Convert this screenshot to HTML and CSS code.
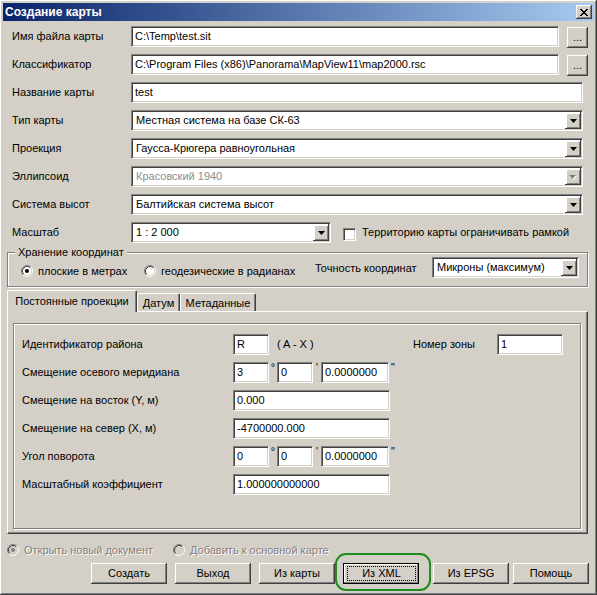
FILE: index.html
```html
<!DOCTYPE html>
<html lang="ru">
<head>
<meta charset="utf-8">
<title>Создание карты</title>
<link rel="stylesheet" href="styles.css">
</head>
<body>
<div class="window">
  <div class="titlebar">
    <span class="title">Создание карты</span>
    <span class="close">
      <svg width="8" height="7" viewBox="0 0 8 7"><g fill="#000"><rect x="0" y="0" width="2" height="1"/><rect x="6" y="0" width="2" height="1"/><rect x="1" y="1" width="2" height="1"/><rect x="5" y="1" width="2" height="1"/><rect x="2" y="2" width="4" height="1"/><rect x="3" y="3" width="2" height="1"/><rect x="2" y="4" width="4" height="1"/><rect x="1" y="5" width="2" height="1"/><rect x="5" y="5" width="2" height="1"/><rect x="0" y="6" width="2" height="1"/><rect x="6" y="6" width="2" height="1"/></g></svg>
    </span>
  </div>

  <div class="content">
    <div class="rows">
      <div class="row">
        <span class="lbl">Имя файла карты</span>
        <div class="edit w-file">C:\Temp\test.sit</div>
        <div class="btn dots">...</div>
      </div>
      <div class="row">
        <span class="lbl">Классификатор</span>
        <div class="edit w-file">C:\Program Files (x86)\Panorama\MapView11\map2000.rsc</div>
        <div class="btn dots">...</div>
      </div>
      <div class="row">
        <span class="lbl">Название карты</span>
        <div class="edit w-full">test</div>
      </div>
      <div class="row">
        <span class="lbl">Тип карты</span>
        <div class="combo w-full"><span class="ctext">Местная система на базе СК-63</span><span class="drop"><svg width="7" height="4" viewBox="0 0 7 4"><polygon points="0,0 7,0 3.5,4" fill="#000"/></svg></span></div>
      </div>
      <div class="row">
        <span class="lbl">Проекция</span>
        <div class="combo w-full"><span class="ctext">Гаусса-Крюгера равноугольная</span><span class="drop"><svg width="7" height="4" viewBox="0 0 7 4"><polygon points="0,0 7,0 3.5,4" fill="#000"/></svg></span></div>
      </div>
      <div class="row">
        <span class="lbl">Эллипсоид</span>
        <div class="combo w-full disabled"><span class="ctext">Красовский 1940</span><span class="drop"><svg width="8" height="5" viewBox="0 0 8 5"><polygon points="1,1 8,1 4.5,5" fill="#fff"/><polygon points="0,0 7,0 3.5,4" fill="#808080"/></svg></span></div>
      </div>
      <div class="row">
        <span class="lbl">Система высот</span>
        <div class="combo w-full"><span class="ctext">Балтийская система высот</span><span class="drop"><svg width="7" height="4" viewBox="0 0 7 4"><polygon points="0,0 7,0 3.5,4" fill="#000"/></svg></span></div>
      </div>
      <div class="row">
        <span class="lbl">Масштаб</span>
        <div class="combo w-scale"><span class="ctext">1 : 2 000</span><span class="drop"><svg width="7" height="4" viewBox="0 0 7 4"><polygon points="0,0 7,0 3.5,4" fill="#000"/></svg></span></div>
        <span class="check"></span>
        <span class="check-lbl">Территорию карты ограничивать рамкой</span>
      </div>
    </div>

    <div class="group">
      <div class="legend">Хранение координат</div>
      <div class="grow">
        <div class="opt opt1">
          <svg class="radio" width="12" height="12" viewBox="0 0 12 12"><circle cx="6" cy="6" r="4.6" fill="#fff"/><path d="M2.11 9.89 A5.5 5.5 0 0 1 9.89 2.11" fill="none" stroke="#808080"/><path d="M9.89 2.11 A5.5 5.5 0 0 1 2.11 9.89" fill="none" stroke="#fff"/><path d="M2.82 9.18 A4.5 4.5 0 0 1 9.18 2.82" fill="none" stroke="#404040"/><path d="M9.18 2.82 A4.5 4.5 0 0 1 2.82 9.18" fill="none" stroke="#D4D0C8"/><circle cx="6" cy="6" r="2" fill="#000"/></svg>
          <span class="otext">плоские в метрах</span>
        </div>
        <div class="opt opt2">
          <svg class="radio" width="12" height="12" viewBox="0 0 12 12"><circle cx="6" cy="6" r="4.6" fill="#fff"/><path d="M2.11 9.89 A5.5 5.5 0 0 1 9.89 2.11" fill="none" stroke="#808080"/><path d="M9.89 2.11 A5.5 5.5 0 0 1 2.11 9.89" fill="none" stroke="#fff"/><path d="M2.82 9.18 A4.5 4.5 0 0 1 9.18 2.82" fill="none" stroke="#404040"/><path d="M9.18 2.82 A4.5 4.5 0 0 1 2.82 9.18" fill="none" stroke="#D4D0C8"/></svg>
          <span class="otext">геодезические в радианах</span>
        </div>
        <span class="prec-lbl">Точность координат</span>
        <div class="combo w-prec"><span class="ctext">Микроны (максимум)</span><span class="drop"><svg width="7" height="4" viewBox="0 0 7 4"><polygon points="0,0 7,0 3.5,4" fill="#000"/></svg></span></div>
      </div>
    </div>

    <div class="tabs">
      <div class="tab tab-active t1">Постоянные проекции</div>
      <div class="tab t2">Датум</div>
      <div class="tab t3">Метаданные</div>
    </div>
    <div class="panel">
      <div class="igroup">
        <div class="irow">
          <span class="ilbl">Идентификатор района</span>
          <div class="edit w-s">R</div>
          <span class="range">( A - X )</span>
          <span class="zone-lbl">Номер зоны</span>
          <div class="edit w-zone">1</div>
        </div>
        <div class="irow">
          <span class="ilbl">Смещение осевого меридиана</span>
          <div class="edit w-s">3</div>
          <span class="mark">°</span>
          <div class="edit w-s">0</div>
          <span class="mark">'</span>
          <div class="edit w-sec">0.0000000</div>
          <span class="mark mark-last">"</span>
        </div>
        <div class="irow">
          <span class="ilbl">Смещение на восток (Y, м)</span>
          <div class="edit w-wide">0.000</div>
        </div>
        <div class="irow">
          <span class="ilbl">Смещение на север (X, м)</span>
          <div class="edit w-wide">-4700000.000</div>
        </div>
        <div class="irow">
          <span class="ilbl">Угол поворота</span>
          <div class="edit w-s">0</div>
          <span class="mark">°</span>
          <div class="edit w-s">0</div>
          <span class="mark">'</span>
          <div class="edit w-sec">0.0000000</div>
          <span class="mark mark-last">"</span>
        </div>
        <div class="irow">
          <span class="ilbl">Масштабный коэффициент</span>
          <div class="edit w-wide">1.000000000000</div>
        </div>
      </div>
    </div>

    <div class="bottom-opts">
      <div class="opt dis b1">
        <svg class="radio" width="12" height="12" viewBox="0 0 12 12"><circle cx="6" cy="6" r="4.6" fill="#D4D0C8"/><path d="M2.11 9.89 A5.5 5.5 0 0 1 9.89 2.11" fill="none" stroke="#808080"/><path d="M9.89 2.11 A5.5 5.5 0 0 1 2.11 9.89" fill="none" stroke="#fff"/><path d="M2.82 9.18 A4.5 4.5 0 0 1 9.18 2.82" fill="none" stroke="#404040"/><path d="M9.18 2.82 A4.5 4.5 0 0 1 2.82 9.18" fill="none" stroke="#D4D0C8"/><circle cx="6" cy="6" r="2" fill="#808080"/></svg>
        <span class="otext">Открыть новый документ</span>
      </div>
      <div class="opt dis">
        <svg class="radio" width="12" height="12" viewBox="0 0 12 12"><circle cx="6" cy="6" r="4.6" fill="#D4D0C8"/><path d="M2.11 9.89 A5.5 5.5 0 0 1 9.89 2.11" fill="none" stroke="#808080"/><path d="M9.89 2.11 A5.5 5.5 0 0 1 2.11 9.89" fill="none" stroke="#fff"/><path d="M2.82 9.18 A4.5 4.5 0 0 1 9.18 2.82" fill="none" stroke="#404040"/><path d="M9.18 2.82 A4.5 4.5 0 0 1 2.82 9.18" fill="none" stroke="#D4D0C8"/></svg>
        <span class="otext">Добавить к основной карте</span>
      </div>
    </div>

    <div class="buttons">
      <div class="btn pbtn">Создать</div>
      <div class="btn pbtn">Выход</div>
      <div class="btn pbtn">Из карты</div>
      <div class="btn pbtn default"><span class="focus">Из XML</span></div>
      <div class="btn pbtn b-epsg">Из EPSG</div>
      <div class="btn pbtn b-help">Помощь</div>
    </div>
  </div>

  <div class="annot"></div>
</div>
</body>
</html>
```

FILE: styles.css
```css
* { box-sizing: border-box; }
html, body { margin: 0; padding: 0; }
body {
  width: 597px;
  height: 595px;
  overflow: hidden;
  background: #D4D0C8;
  font-family: "Liberation Sans", Arial, sans-serif;
  font-size: 11px;
  color: #000;
}
.window {
  position: relative;
  width: 597px;
  height: 595px;
  padding: 3px;
  background: #D4D0C8;
  box-shadow: inset -1px -1px 0 #404040, inset 1px 1px 0 #fff, inset -2px -2px 0 #808080;
  display: flex;
  flex-direction: column;
}
.titlebar {
  height: 18px;
  flex: none;
  background: linear-gradient(to right, #0A246A, #A6CAF0);
  display: flex;
  align-items: center;
  justify-content: space-between;
  padding: 0 2px 0 2px;
}
.title {
  color: #fff;
  font-weight: bold;
  font-size: 12px;
  line-height: 14px;
  white-space: nowrap;
}
.close {
  width: 16px;
  height: 14px;
  background: #D4D0C8;
  box-shadow: inset -1px -1px 0 #404040, inset 1px 1px 0 #fff, inset -2px -2px 0 #808080;
  display: flex;
  align-items: center;
  justify-content: center;
  padding-right: 1px;
}
.close svg { display: block; }

.content {
  flex: 1;
  padding: 5px 4px 0 4px;
  display: flex;
  flex-direction: column;
}
.rows {
  display: flex;
  flex-direction: column;
  gap: 7px;
  padding-left: 5px;
}
.row {
  display: flex;
  align-items: center;
  height: 21px;
}
.lbl {
  width: 119px;
  flex: none;
  line-height: 13px;
  white-space: nowrap;
}
.edit {
  height: 21px;
  flex: none;
  background: #fff;
  border: 1px solid;
  border-color: #808080 #fff #fff #808080;
  box-shadow: inset 1px 1px 0 #404040, inset -1px -1px 0 #D4D0C8;
  padding: 0 2px 0 3px;
  line-height: 19px;
  white-space: nowrap;
  overflow: hidden;
}
.w-file { width: 428px; }
.w-full { width: 452px; }
.w-scale { width: 200px; }
.w-prec { width: 147px; }

.btn {
  background: #D4D0C8;
  box-shadow: inset -1px -1px 0 #404040, inset 1px 1px 0 #fff, inset -2px -2px 0 #808080;
  display: flex;
  align-items: center;
  justify-content: center;
  white-space: nowrap;
}
.dots {
  width: 21px;
  height: 21px;
  margin-left: 8px;
  align-self: flex-start;
  margin-top: 1px;
  line-height: 13px;
  padding-bottom: 1px;
}

.combo {
  height: 21px;
  flex: none;
  display: flex;
  background: #fff;
  border: 1px solid;
  border-color: #808080 #fff #fff #808080;
  box-shadow: inset 1px 1px 0 #404040, inset -1px -1px 0 #D4D0C8;
  padding: 1px;
}
.ctext {
  flex: 1;
  padding-left: 3px;
  line-height: 17px;
  white-space: nowrap;
  overflow: hidden;
}
.disabled .ctext { color: #8c8c8c; }
.drop {
  width: 16px;
  height: 17px;
  flex: none;
  background: #D4D0C8;
  box-shadow: inset -1px -1px 0 #404040, inset 2px 2px 0 #fff, inset -2px -2px 0 #808080;
  display: flex;
  align-items: center;
  justify-content: center;
  padding-top: 1px;
}
.drop svg { display: block; }

.check {
  width: 13px;
  height: 13px;
  flex: none;
  margin-left: 12px;
  align-self: flex-start;
  margin-top: 6px;
  background: #fff;
  border: 1px solid;
  border-color: #808080 #fff #fff #808080;
  box-shadow: inset 1px 1px 0 #404040, inset -1px -1px 0 #D4D0C8;
}
.check-lbl {
  margin-left: 6px;
  white-space: nowrap;
  line-height: 13px;
}

.group {
  margin-top: 9px;
  width: 581px;
  height: 35px;
  flex: none;
  border: 1px solid #808080;
  box-shadow: inset 1px 1px 0 #fff, 1px 1px 0 #fff;
}
.legend {
  width: max-content;
  height: 13px;
  line-height: 13px;
  margin: -7px 0 -6px 7px;
  padding: 0 3px;
  background: #D4D0C8;
  white-space: nowrap;
}
.grow {
  display: flex;
  align-items: flex-start;
  padding-left: 13px;
}
.opt {
  display: flex;
  align-items: center;
  flex: none;
}
.opt1 { width: 123px; margin-top: 12px; }
.opt2 { width: 171px; margin-top: 12px; }
.radio { display: block; flex: none; }
.otext {
  margin-left: 5px;
  line-height: 12px;
  white-space: nowrap;
}
.prec-lbl {
  width: 117px;
  flex: none;
  margin-top: 9px;
  line-height: 13px;
  white-space: nowrap;
}
.grow .combo { margin-top: 4px; }

.tabs {
  margin-top: 3px;
  height: 21px;
  flex: none;
  display: flex;
  align-items: flex-end;
}
.tab {
  height: 18px;
  background: #D4D0C8;
  border-top: 1px solid #fff;
  border-left: 1px solid #fff;
  border-right: 1px solid #404040;
  box-shadow: inset -1px 0 0 #808080;
  border-radius: 2px 2px 0 0;
  display: flex;
  align-items: center;
  justify-content: center;
  white-space: nowrap;
  line-height: 13px;
  padding-top: 1px;
}
.tab-active {
  height: 22px;
  margin-bottom: -1px;
  position: relative;
  z-index: 1;
  padding-top: 0;
  padding-bottom: 1px;
}
.t1 { width: 130px; }
.t2 { width: 43px; }
.t3 { width: 76px; }

.panel {
  width: 581px;
  height: 223px;
  flex: none;
  border: 1px solid;
  border-color: #fff #404040 #404040 #fff;
  box-shadow: inset -1px -1px 0 #808080;
  padding: 11px 6px 0 5px;
}
.igroup {
  width: 568px;
  height: 206px;
  border: 1px solid #808080;
  box-shadow: inset 1px 1px 0 #fff, 1px 1px 0 #fff;
  padding: 10px 0 0 8px;
  display: flex;
  flex-direction: column;
  gap: 7px;
}
.irow {
  display: flex;
  align-items: center;
  height: 21px;
}
.ilbl {
  width: 211px;
  flex: none;
  line-height: 13px;
  white-space: nowrap;
}
.w-s { width: 36px; }
.w-sec { width: 68px; }
.w-wide { width: 157px; }
.w-zone { width: 66px; }
.range {
  width: 136px;
  flex: none;
  margin-left: 8px;
  line-height: 13px;
  white-space: nowrap;
}
.zone-lbl {
  width: 84px;
  flex: none;
  line-height: 13px;
  white-space: nowrap;
}
.mark {
  width: 8px;
  flex: none;
  align-self: flex-start;
  text-align: center;
  line-height: 11px;
  font-size: 11px;
}
.mark-last { width: auto; margin-left: 2px; }

.bottom-opts {
  margin-top: 9px;
  height: 13px;
  flex: none;
  display: flex;
  align-items: center;
}
.b1 { width: 166px; }
.dis .otext {
  color: #808080;
  text-shadow: 1px 1px 0 #fff;
}

.buttons {
  margin-top: 7px;
  display: flex;
  gap: 8px;
  padding-left: 84px;
}
.pbtn {
  width: 76px;
  height: 21px;
  flex: none;
  line-height: 13px;
}
.default {
  box-shadow: inset 0 0 0 1px #000, inset -2px -2px 0 #808080, inset 2px 2px 0 #fff;
  padding: 3px 3px 3px 4px;
}
.focus {
  flex: 1;
  align-self: stretch;
  display: flex;
  align-items: center;
  justify-content: center;
  border: 1px dotted #000;
}
.b-epsg { margin-left: 6px; }
.b-help { margin-left: -4px; }

.annot {
  position: absolute;
  left: 335px;
  top: 553px;
  width: 96px;
  height: 38px;
  border: 2px solid #1E8C1E;
  border-radius: 11px;
  pointer-events: none;
}
```
